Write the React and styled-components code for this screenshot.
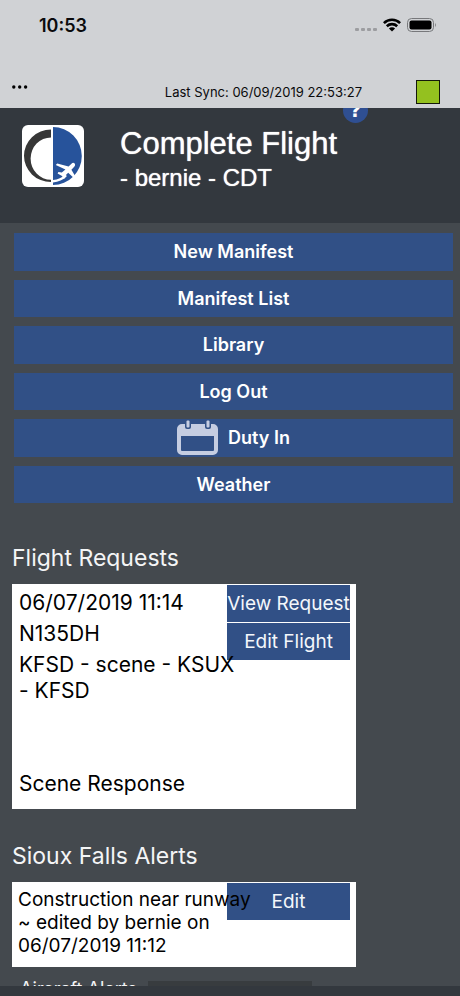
import React, { useState } from 'react';
import styled, { createGlobalStyle } from 'styled-components';

const GlobalStyle = createGlobalStyle`
  * {
    box-sizing: border-box;
  }
  body {
    margin: 0;
    background-color: #44494e;
    font-family: Inter, "Liberation Sans", sans-serif;
  }
  button {
    font-family: inherit;
    border: none;
    padding: 0;
    cursor: pointer;
  }
`;

const Screen = styled.div`
  height: 100vh;
  display: flex;
  flex-direction: column;
  overflow: hidden;
`;

const TopArea = styled.header`
  flex: none;
  background-color: #d0d2d5;
  color: #0a0a0c;
`;

const StatusBar = styled.div`
  height: 50px;
  padding: 0 23px 0 39px;
  display: flex;
  align-items: center;
  justify-content: space-between;
`;

const Clock = styled.span`
  font-size: 18px;
  font-weight: 600;
`;

const StatusIcons = styled.div`
  display: flex;
  align-items: center;
  gap: 6px;
`;

const SyncBar = styled.div`
  height: 58px;
  padding: 25px 20px 0 12px;
  display: flex;
  align-items: center;
  justify-content: space-between;
`;

const MoreButton = styled.button`
  background: none;
  height: 32px;
  display: flex;
  align-items: flex-start;
  padding-top: 9px;
`;

const SyncText = styled.span`
  margin-left: auto;
  margin-right: 54px;
  font-size: 13px;
`;

const SyncLight = styled.span`
  width: 24px;
  height: 24px;
  background-color: #94c11f;
  border: 1px solid #14180a;
`;

const Content = styled.main`
  flex: 1;
  min-height: 0;
  overflow: hidden;
`;

const Banner = styled.div`
  position: relative;
  height: 115px;
  padding: 17px 22px 0;
  display: flex;
  gap: 36px;
  background-color: #33383e;
  color: #ffffff;
`;

const HelpButton = styled.button`
  position: absolute;
  top: -10px;
  right: 92px;
  width: 25px;
  height: 25px;
  border-radius: 50%;
  background-color: #2f4f92;
  color: #ffffff;
  font-family: "DejaVu Sans", sans-serif;
  font-size: 19px;
  line-height: 25px;
  font-weight: 700;
`;

const BannerText = styled.div`
  font-family: "Liberation Sans", Arial, sans-serif;
  text-shadow: 0 0 1px #ffffff;
`;

const Title = styled.h1`
  margin: 0;
  font-size: 31px;
  line-height: 38px;
  font-weight: 400;
`;

const Subtitle = styled.p`
  margin: 0;
  font-size: 24px;
  line-height: 30px;
`;

/* rows share the height so they stay even */
const Menu = styled.nav`
  height: 270px;
  margin: 10px 7px 0 14px;
  display: grid;
  grid-auto-rows: 1fr;
  gap: 9px;
`;

const MenuButton = styled.button`
  display: flex;
  align-items: center;
  justify-content: center;
  gap: 10px;
  background-color: #315086;
  color: #ffffff;
  font-size: 18px;
  font-weight: 600;
`;

const Section = styled.section`
  padding: 0 12px;
  margin-top: ${(props) => props.$top}px;
`;

const SectionTitle = styled.h2`
  margin: 0;
  font-size: 23px;
  line-height: 28px;
  font-weight: 400;
  color: #f4f5f6;
`;

const Card = styled.article`
  position: relative;
  max-width: 344px;
  min-height: ${(props) => props.$minHeight}px;
  margin-top: 12px;
  padding: ${(props) => props.$padding};
  background-color: #ffffff;
  color: #000000;
`;

const CardActions = styled.div`
  position: absolute;
  top: 1px;
  right: 6px;
  width: 123px;
  display: flex;
  flex-direction: column;
  gap: 1px;
`;

const CardButton = styled.button`
  height: 37px;
  background-color: #315086;
  color: #f4f7fb;
  font-size: 19px;
  white-space: nowrap;
`;

const CardLine = styled.p`
  position: relative;
  margin: 0 0 5px;
  width: 220px;
  font-size: 21px;
  line-height: 26px;
  pointer-events: none;
`;

const CardFooter = styled(CardLine)`
  margin-top: 67px;
`;

const AlertText = styled(CardLine)`
  margin: 0;
  width: 240px;
  font-size: 19px;
  line-height: 23px;
`;

const AircraftRow = styled.section`
  margin: 10px 20px 0;
  display: flex;
  align-items: flex-start;
  gap: 12px;
`;

const AircraftTitle = styled.h2`
  margin: 0;
  width: 116px;
  font-size: 18px;
  line-height: 24px;
  font-weight: 400;
  white-space: nowrap;
  color: #f4f5f6;
`;

const AircraftPanel = styled.div`
  width: 164px;
  height: 37px;
  margin-top: 4px;
  background-color: #383c3f;
`;

const BottomBar = styled.footer`
  flex: none;
  height: 10px;
  background-color: #33383e;
`;

const Signal = () => (
  <svg width="22" height="18" viewBox="0 0 22 18" fill="#9c9da0">
    <rect x="0" y="12" width="4" height="3" rx="1" />
    <rect x="6" y="12" width="4" height="3" rx="1" />
    <rect x="12" y="12" width="4" height="3" rx="1" />
    <rect x="18" y="12" width="4" height="3" rx="1" />
  </svg>
);

const Wifi = () => (
  <svg width="18" height="14" viewBox="0 0 18 14" fill="none" stroke="#000000" strokeWidth="2.6">
    <path d="M0.9 5.1 A11.6 11.6 0 0 1 17.1 5.1" />
    <path d="M3.8 8.2 A7.5 7.5 0 0 1 14.2 8.2" />
    <path d="M9 13.6 L5.9 10.6 A4.4 4.4 0 0 1 12.1 10.6 Z" fill="#000000" stroke="none" />
  </svg>
);

const Battery = () => (
  <svg width="30" height="14" viewBox="0 0 30 14">
    <rect x="0.5" y="0.5" width="26" height="13" rx="4" fill="none" stroke="#77787b" />
    <rect x="2.5" y="2.5" width="22" height="9" rx="2" fill="#000000" />
    <path d="M28 4.8 Q29.8 7 28 9.2 Z" fill="#77787b" />
  </svg>
);

const Dots = () => (
  <svg width="16" height="4" viewBox="0 0 16 4" fill="#000000">
    <circle cx="1.8" cy="2" r="1.7" />
    <circle cx="7.7" cy="2" r="1.7" />
    <circle cx="13.6" cy="2" r="1.7" />
  </svg>
);

const Logo = () => (
  <svg width="62" height="62" viewBox="0 0 62 62">
    <rect width="62" height="62" rx="6" fill="#ffffff" />
    <path
      d="M29 4.5 A27 26.3 0 0 0 29 57.1 L29 54.8 A20.4 21.2 0 0 1 29 12.4 Z"
      fill="#373737"
    />
    <path d="M31 2 A28.8 29 0 0 1 31 60 Z" fill="#27539b" />
    {/* contrail */}
    <path d="M31 55 C36 54.6 40 52.6 43 49.4 L45 51 C41 55 36.5 57 31 57.4 Z" fill="#ffffff" />
    {/* plane */}
    <path
      d="M52.4 38.2 Q54 39.6 52 42 L49.4 44.8 L53.4 51.6 L51.8 53 L46.2 47.8 L43.4 50.4 L43.2 53 L41.8 53.8 L40 51 L35.6 48.6 L36.4 47 L39.8 47.4 L43.4 44.6 L33.8 40 L35.2 38.4 L46.6 41.4 L49.2 39 Q51 37.2 52.4 38.2 Z"
      fill="#ffffff"
    />
  </svg>
);

const Calendar = () => (
  <svg width="41" height="35" viewBox="0 0 41 35">
    <rect x="2" y="6" width="37" height="27" rx="3" fill="none" stroke="#c5cde1" strokeWidth="4" />
    <rect x="2" y="6" width="37" height="10" fill="#c5cde1" />
    <rect x="8" y="0" width="6" height="9" rx="2" fill="#315086" />
    <rect x="28" y="0" width="6" height="9" rx="2" fill="#315086" />
    <rect x="9.5" y="0.5" width="3" height="7" rx="1" fill="#c5cde1" />
    <rect x="29.5" y="0.5" width="3" height="7" rx="1" fill="#c5cde1" />
  </svg>
);

const menuItems = ['New Manifest', 'Manifest List', 'Library', 'Log Out', 'Duty In', 'Weather'];

const App = () => {
  const [lastSync] = useState('06/09/2019 22:53:27');

  return (
    <Screen>
      <GlobalStyle />
      <TopArea>
        <StatusBar>
          <Clock>10:53</Clock>
          <StatusIcons>
            <Signal />
            <Wifi />
            <Battery />
          </StatusIcons>
        </StatusBar>
        <SyncBar>
          <MoreButton type="button" aria-label="More">
            <Dots />
          </MoreButton>
          <SyncText>Last Sync: {lastSync}</SyncText>
          <SyncLight />
        </SyncBar>
      </TopArea>

      <Content>
        <Banner>
          <HelpButton type="button">?</HelpButton>
          <Logo />
          <BannerText>
            <Title>Complete Flight</Title>
            <Subtitle>- bernie - CDT</Subtitle>
          </BannerText>
        </Banner>

        <Menu>
          {menuItems.map((item) => (
            <MenuButton key={item} type="button">
              {item === 'Duty In' && <Calendar />}
              {item}
            </MenuButton>
          ))}
        </Menu>

        <Section $top={41}>
          <SectionTitle>Flight Requests</SectionTitle>
          <Card $minHeight={225} $padding="6px 7px">
            <CardActions>
              <CardButton type="button">View Request</CardButton>
              <CardButton type="button">Edit Flight</CardButton>
            </CardActions>
            <CardLine>06/07/2019 11:14</CardLine>
            <CardLine>N135DH</CardLine>
            <CardLine>KFSD - scene - KSUX - KFSD</CardLine>
            <CardFooter>Scene Response</CardFooter>
          </Card>
        </Section>

        <Section $top={33}>
          <SectionTitle>Sioux Falls Alerts</SectionTitle>
          <Card $minHeight={85} $padding="6px 6px 10px">
            <CardActions>
              <CardButton type="button">Edit</CardButton>
            </CardActions>
            <AlertText>Construction near runway ~ edited by bernie on 06/07/2019 11:12</AlertText>
          </Card>
        </Section>

        <AircraftRow>
          <AircraftTitle>Aircraft Alerts</AircraftTitle>
          <AircraftPanel />
        </AircraftRow>
      </Content>
      <BottomBar />
    </Screen>
  );
};

export default App;
